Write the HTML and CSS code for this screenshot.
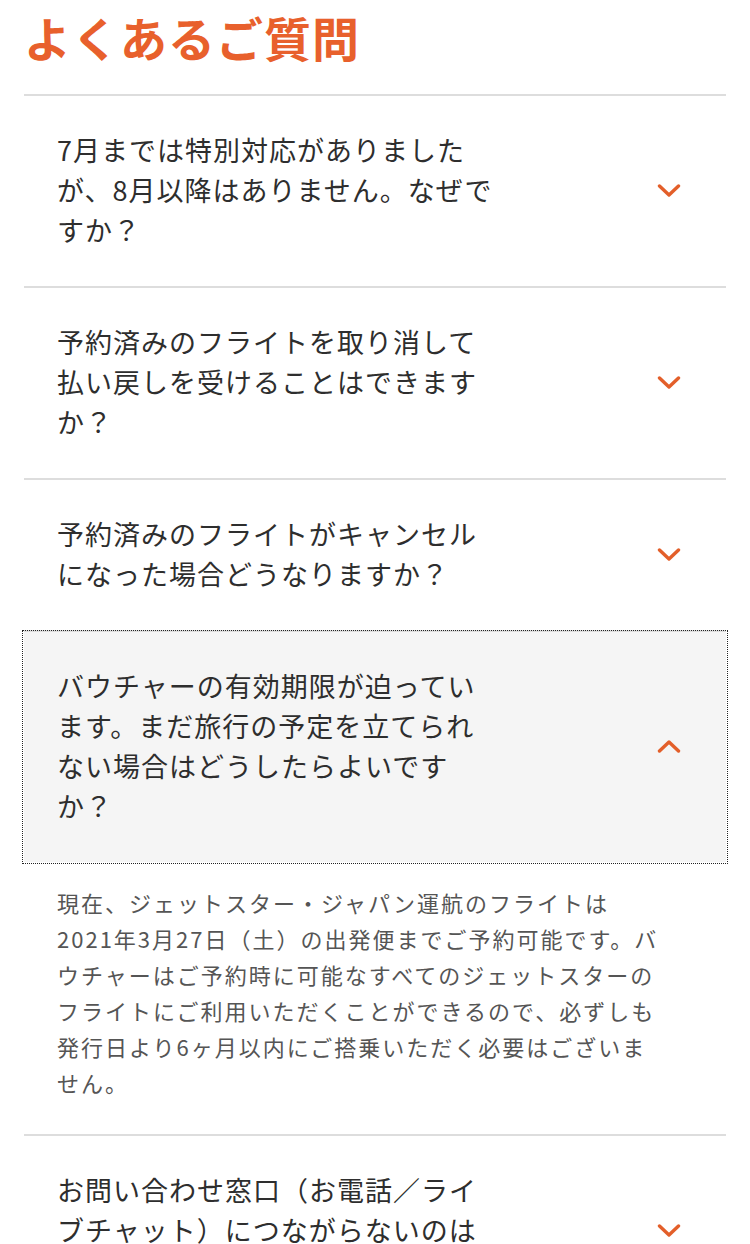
FILE: index.html
```html
<!DOCTYPE html>
<html lang="ja">
<head>
<meta charset="utf-8">
<title>よくあるご質問</title>
<link rel="stylesheet" href="styles.css">
</head>
<body>
<main class="page">
  <h1 class="page-title">よくあるご質問</h1>

  <div class="faq">
    <div class="faq-item">
      <button class="faq-q" type="button" aria-expanded="false">
        <span class="faq-q-text">7月までは特別対応がありましたが、8月以降はありません。なぜですか？</span>
        <svg class="chev" viewBox="0 0 24 13" aria-hidden="true"><polyline points="2.5,2 12,11 21.5,2"/></svg>
      </button>
    </div>

    <div class="faq-item">
      <button class="faq-q" type="button" aria-expanded="false">
        <span class="faq-q-text">予約済みのフライトを取り消して払い戻しを受けることはできますか？</span>
        <svg class="chev" viewBox="0 0 24 13" aria-hidden="true"><polyline points="2.5,2 12,11 21.5,2"/></svg>
      </button>
    </div>

    <div class="faq-item">
      <button class="faq-q" type="button" aria-expanded="false">
        <span class="faq-q-text">予約済みのフライトがキャンセルになった場合どうなりますか？</span>
        <svg class="chev" viewBox="0 0 24 13" aria-hidden="true"><polyline points="2.5,2 12,11 21.5,2"/></svg>
      </button>
    </div>

    <div class="faq-item is-open">
      <button class="faq-q is-focused" type="button" aria-expanded="true">
        <span class="faq-q-text">バウチャーの有効期限が迫っています。まだ旅行の予定を立てられない場合はどうしたらよいですか？</span>
        <svg class="chev" viewBox="0 0 24 13" aria-hidden="true"><polyline points="2.5,11 12,2 21.5,11"/></svg>
      </button>
      <div class="faq-a">
        <p>現在、ジェットスター・ジャパン運航のフライトは2021年3月27日（土）の出発便までご予約可能です。バウチャーはご予約時に可能なすべてのジェットスターのフライトにご利用いただくことができるので、必ずしも発行日より6ヶ月以内にご搭乗いただく必要はございません。</p>
      </div>
    </div>

    <div class="faq-item">
      <button class="faq-q" type="button" aria-expanded="false">
        <span class="faq-q-text">お問い合わせ窓口（お電話／ライブチャット）につながらないのはなぜですか？</span>
        <svg class="chev" viewBox="0 0 24 13" aria-hidden="true"><polyline points="2.5,2 12,11 21.5,2"/></svg>
      </button>
    </div>
  </div>
</main>
</body>
</html>
```

FILE: styles.css
```css
html, body {
  margin: 0;
  padding: 0;
  background: #ffffff;
}

body {
  font-family: "Noto Sans CJK JP", "Noto Sans", sans-serif;
  color: #333333;
}

.page {
  padding: 0 24px;
}

.page-title {
  margin: 0 0 29px;
  padding: 9px 0 0;
  font-size: 47px;
  line-height: 56px;
  font-weight: 700;
  letter-spacing: 1px;
  color: #e8602c;
}

.faq-item {
  border-top: 2px solid #dddddd;
}

.faq-q {
  display: flex;
  align-items: center;
  justify-content: space-between;
  width: 100%;
  margin: 0;
  padding: 34px 45px 36px 33px;
  border: 0;
  background: transparent;
  font: inherit;
  color: #2e2e2e;
  text-align: left;
  cursor: pointer;
}

.faq-q.is-focused {
  background: #f5f5f5;
  outline: 1px dotted #222222;
  outline-offset: 1px;
}

.faq-q-text {
  display: block;
  width: 440px;
  font-size: 27px;
  line-height: 40px;
  letter-spacing: 1px;
}

.chev {
  flex: none;
  width: 24px;
  height: 13px;
  fill: none;
  stroke: #e35f2a;
  stroke-width: 3.4;
  stroke-linecap: round;
  stroke-linejoin: round;
}

.faq-a {
  padding: 22px 0 34px 33px;
}

.faq-a p {
  margin: 0;
  width: 604px;
  font-size: 22px;
  line-height: 36px;
  letter-spacing: 2px;
  color: #555555;
}
```
